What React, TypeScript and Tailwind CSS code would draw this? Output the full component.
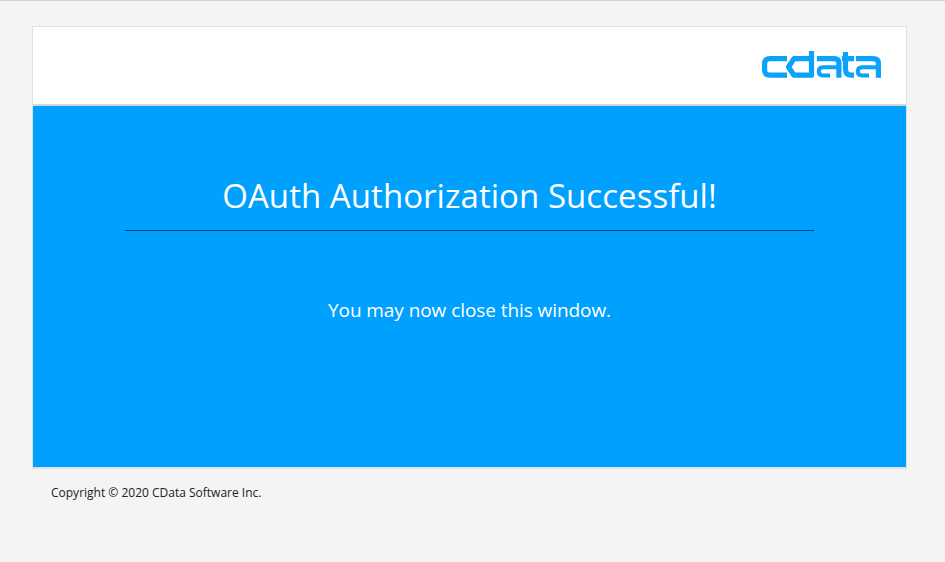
export default function App() {
  return (
    <div className="h-[562px] w-[945px] overflow-hidden border-t border-[#cfcfcf] bg-[#f4f4f4] pt-[25px] font-['Open_Sans','Noto_Sans',sans-serif]">
      <div className="mx-[32px] w-[875px] border border-b-2 border-[#e0e0e0]">
        <header className="flex h-[79px] items-center justify-end border-b-2 border-[#d6d6d6] bg-white pr-[25px]">
          <svg width="119" height="28" viewBox="0 0 119 28" className="mt-[-4px]" fill="none" stroke="#0aa2fb" strokeWidth="5.200" strokeLinejoin="round">
            <path d="M25 8.600H8Q2.600 8.600 2.600 14V20Q2.600 25.200 8 25.200H25" />
            <path d="M49.500 1V25.200H32L26.500 17L32 8.600H47.500" />
            <path d="M55 8.600H72Q76.900 8.600 76.900 13V27.800" />
            <path d="M75 17.200H61Q56.800 17.200 56.800 21.200Q56.800 25.400 61 25.400H68" strokeWidth="4" />
            <path d="M83.500 2V19Q83.500 25.200 89 25.200H92M80 8.600H92" />
            <path d="M94 8.600H111Q116.400 8.600 116.400 13V27.800" />
            <path d="M115 17.200H100Q95.800 17.200 95.800 21.200Q95.800 25.400 100 25.400H107" strokeWidth="4" />
          </svg>
        </header>
        <main className="flex h-[361px] flex-col items-center bg-[#00a0ff] text-white">
          <h1 className="mt-[66px] flex h-[59px] w-[689px] items-center justify-center border-b border-[#063f63] pb-[10px] text-[33px] font-normal tracking-[0.05px]">
            OAuth Authorization Successful!
          </h1>
          <p className="mt-[64px] text-[19px] leading-[30px] tracking-[-0.07px]">You may now close this window.</p>
        </main>
      </div>
      <footer className="ml-[51px] mt-[14px] text-[12px] leading-[20px] text-[#222]">
        Copyright © 2020 CData Software Inc.
      </footer>
    </div>
  );
}
